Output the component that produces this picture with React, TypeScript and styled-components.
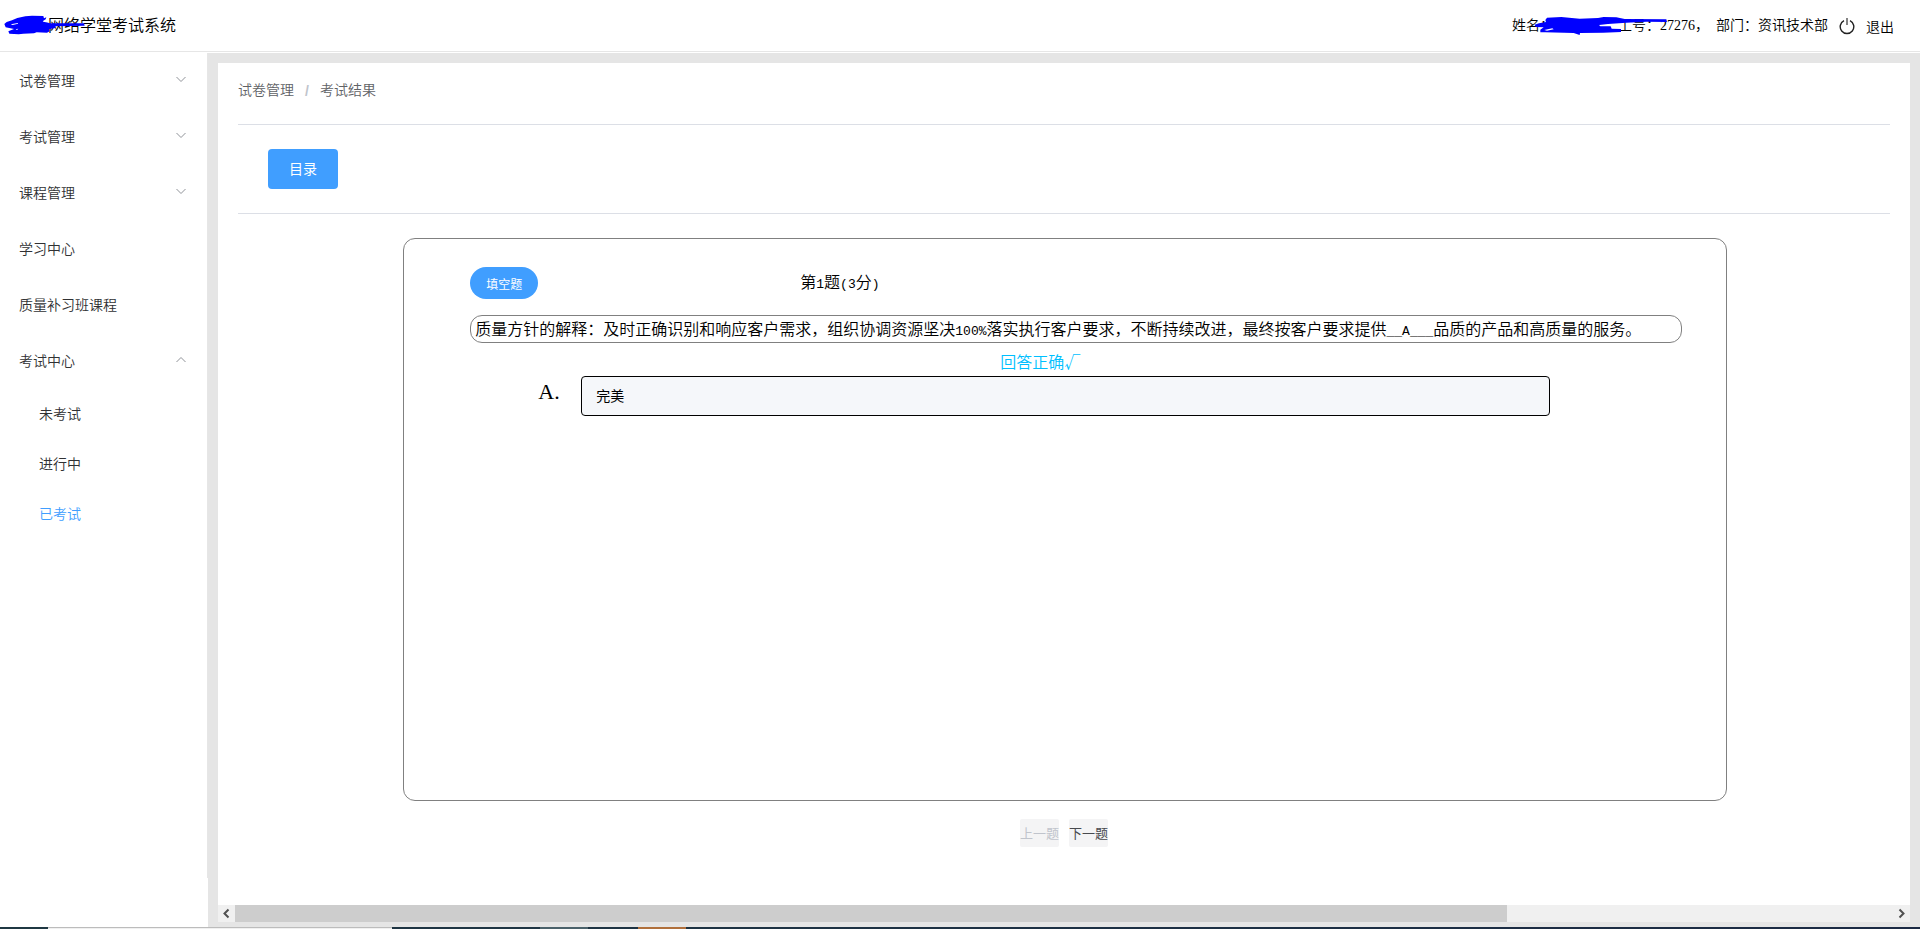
import React from 'react';
import styled, { createGlobalStyle } from 'styled-components';

const GlobalStyle = createGlobalStyle`
  *, *::before, *::after { box-sizing: border-box; }
  body {
    margin: 0;
    background: #fff;
    color: #000;
    font-family: 'Liberation Serif', 'Noto Sans CJK SC', sans-serif;
    font-size: 16px;
    line-height: 20px;
  }
  button, input { font-family: 'Noto Sans CJK SC', sans-serif; }
`;

const Page = styled.div`
  display: flex;
  flex-direction: column;
  min-height: 100vh;
`;

const Header = styled.header`
  display: flex;
  align-items: center;
  justify-content: space-between;
  height: 52px;
  margin-bottom: 1px;
  padding: 0 26px 0 48px;
  border-bottom: 1px solid #e6e6e6;
`;

const Title = styled.h1`
  position: relative;
  margin: 0;
  font-size: 16px;
  font-weight: 350;
`;

const UserBar = styled.div`
  position: relative;
  display: flex;
  align-items: center;
  font-size: 14px;
  font-weight: 350;
`;

const UserName = styled.span`
  width: 106px;
`;

const Department = styled.span`
  margin-left: 7px;
`;

const Logout = styled.button`
  display: flex;
  align-items: center;
  gap: 11px;
  margin-left: 11px;
  padding: 0;
  border: 0;
  background: none;
  color: #000;
  font-size: 14px;
  font-weight: 350;
  line-height: 20px;
  cursor: pointer;
`;

const Scribble = styled.svg<{ $left: number }>`
  position: absolute;
  left: ${(p) => p.$left}px;
  top: -6px;
  fill: #00f;
`;

const Body = styled.div`
  display: flex;
  flex: 1;
`;

const Sidebar = styled.aside`
  display: flex;
  flex: none;
  width: 208px;
  padding-bottom: 49px;
`;

const Menu = styled.nav`
  flex: 1;
  border-right: 1px solid #e6e6e6;
`;

const MenuItem = styled.button`
  display: flex;
  align-items: center;
  justify-content: space-between;
  width: 100%;
  height: 56px;
  padding: 0 20px 2px 19px;
  border: 0;
  background: none;
  color: #303133;
  font-size: 14px;
  font-weight: 350;
  text-align: left;
  cursor: pointer;
`;

const SubMenu = styled.div`
  padding: 1px 0 0 39px;
`;

const SubItem = styled.a<{ $active?: boolean }>`
  display: block;
  color: ${(p) => (p.$active ? '#409eff' : '#303133')};
  font-size: 14px;
  font-weight: 350;
  line-height: 50px;
  text-decoration: none;
`;

const Main = styled.main`
  display: flex;
  flex: 1;
  min-width: 0;
  padding: 10px 10px 5px;
  background: #e5e5e5;
`;

const Panel = styled.div`
  display: flex;
  flex: 1;
  flex-direction: column;
  min-width: 0;
  background: #fff;
`;

const Content = styled.div`
  display: flex;
  flex: 1;
  flex-direction: column;
  padding: 0 20px 58px;
`;

const Breadcrumb = styled.nav`
  display: flex;
  align-items: center;
  height: 61px;
  padding-bottom: 5px;
  color: #606266;
  font-size: 14px;
  font-weight: 350;
`;

const Crumb = styled.a`
  color: inherit;
  text-decoration: none;
`;

const Separator = styled.span`
  width: 26px;
  color: #c0c4cc;
  font-family: 'Liberation Sans', sans-serif;
  font-weight: 700;
  text-align: center;
`;

const Toolbar = styled.div`
  padding: 24px 30px;
  border: solid #dcdfe6;
  border-width: 1px 0;
`;

const PrimaryButton = styled.button`
  display: block;
  width: 70px;
  height: 40px;
  padding: 0 0 2px;
  border: 0;
  border-radius: 4px;
  background: #409eff;
  color: #fff;
  font-size: 14px;
  cursor: pointer;
`;

const Card = styled.section`
  flex: 1;
  box-sizing: content-box;
  width: 80%;
  margin: 24px 0 0 10%;
  border: 1px solid #808080;
  border-radius: 12px;
`;

const Question = styled.div`
  width: 92%;
  margin-left: 5%;
  padding-top: 28px;
  font-weight: 350;
`;

const QuestionHead = styled.div`
  display: flex;
  align-items: center;
  height: 32px;
`;

const TypeButton = styled.button`
  width: 68px;
  height: 32px;
  padding: 0;
  border: 0;
  border-radius: 16px;
  background: #409eff;
  color: #fff;
  font-size: 12px;
`;

const QuestionTitle = styled.h2`
  margin: 0 0 0 262px;
  font-size: 16px;
  font-weight: 350;
`;

const QuestionText = styled.p`
  width: 1212px;
  max-width: 100%;
  margin: 16px 0 0;
  padding: 4px 4px 2px;
  border: 1px solid #808080;
  border-radius: 12px;
`;

const Half = styled.span`
  font-family: 'Liberation Mono', monospace;
  font-size: 13px;
  line-height: 1;
`;

const Verdict = styled.p`
  margin: 8px 0 0;
  padding-right: 76px;
  color: #00bfff;
  font-family: 'Noto Sans CJK SC', sans-serif;
  text-align: center;
`;

const AnswerRow = styled.div`
  display: flex;
  align-items: center;
  margin-top: 5px;
  padding-left: 68px;
`;

const AnswerLabel = styled.label`
  flex: none;
  width: 43px;
  padding-bottom: 8px;
  font-size: 22px;
  line-height: 24px;
`;

const AnswerInput = styled.input`
  flex: 0 1 969px;
  min-width: 0;
  height: 40px;
  padding: 0 14px 2px;
  border: 1px solid #000;
  border-radius: 4px;
  background: #f5f7fa;
  color: #000;
  font-size: 14px;
`;

const Pager = styled.div`
  display: flex;
  justify-content: center;
  gap: 10px;
  margin-top: 18px;
`;

const PageButton = styled.button`
  width: 39px;
  height: 28px;
  padding: 0 0 2px;
  border: 0;
  border-radius: 2px;
  background: #f4f4f5;
  color: #484a4e;
  font-size: 13px;
  white-space: nowrap;
  &:disabled { color: #c0c4cc; }
`;

const ScrollBar = styled.div`
  display: flex;
  height: 17px;
  background: #f0f0f0;
`;

const ScrollButton = styled.button`
  flex: none;
  width: 17px;
  height: 17px;
  padding: 0;
  border: 0;
  background: none;
  svg { display: block; }
`;

const Track = styled.div`
  flex: 1;
`;

const Thumb = styled.div`
  width: 76.7%;
  height: 100%;
  background: #cdcdcd;
`;

const TaskStrip = styled.footer`
  display: flex;
  height: 2px;
  background: linear-gradient(90deg, #1f3843, #1b2a44);
`;

const TaskSegment = styled.span<{ $width: number; $color?: string }>`
  flex: none;
  width: ${(p) => p.$width}px;
  background: ${(p) => p.$color ?? 'transparent'};
`;

const Chevron = ({ up }: { up?: boolean }) => (
  <svg width="12" height="12" viewBox="0 0 12 12" fill="none" stroke="#909399" aria-hidden="true">
    <path d={up ? 'M1.5 8L6 3.5L10.5 8' : 'M1.5 3L6 7.5L10.5 3'} />
  </svg>
);

const menu = [
  { label: '试卷管理', group: true },
  { label: '考试管理', group: true },
  { label: '课程管理', group: true },
  { label: '学习中心' },
  { label: '质量补习班课程' },
  { label: '考试中心', group: true, open: true },
];

const examPages = ['未考试', '进行中', '已考试'];

export default function App() {
  return (
    <Page>
      <GlobalStyle />
      <Header>
        <Title>
          网络学堂考试系统
          <Scribble $left={-48} width="90" height="30" viewBox="0 30 270 90" aria-hidden="true">
            <path d="M13 72L20 66L36 61L52 54L76 49L96 47L130 48L132 55L139 52L137 58L128 64L139 67L150 70L252 70L254 77L166 79L165 84L147 88L149 94L141 98L110 97L102 100L70 101L56 103L28 101L25 94L42 87L17 82Z" />
            <path fill="#fff" d="M32 73L54 69L54 71L38 75ZM47 88L55 86L51 90ZM128 65L141 59L139 67Z" />
          </Scribble>
        </Title>
        <UserBar>
          <UserName>姓名：</UserName>
          <span>工号：27276，</span>
          <Department>部门：资讯技术部</Department>
          <Logout type="button">
            <svg width="16" height="18" viewBox="0 0 16 18" fill="none" stroke="#222" strokeWidth="1.4" aria-hidden="true">
              <path d="M5 3.6A6.8 6.8 0 1 0 11 3.6" />
              <path d="M8 1V8" stroke="#777" strokeWidth="1.8" />
            </svg>
            退出
          </Logout>
          <Scribble $left={21} width="140" height="30" viewBox="160 30 420 90" aria-hidden="true">
            <path d="M202 53L245 51L300 56L355 54L372 51L410 52L435 57L560 58L562 66L500 65L440 68L385 72L358 75L362 79L393 79L396 86L424 87L424 96L370 98L301 99L300 105L282 99L196 97L182 97L182 89L192 82L168 81L165 74L178 70L199 66L197 60Z" />
            <path fill="#fff" d="M194 90L218 85L222 88L202 92Z" />
          </Scribble>
        </UserBar>
      </Header>
      <Body>
        <Sidebar>
          <Menu>
            {menu.map((item) => (
              <MenuItem key={item.label} type="button" aria-expanded={item.group ? !!item.open : undefined}>
                {item.label}
                {item.group && <Chevron up={item.open} />}
              </MenuItem>
            ))}
            <SubMenu>
              {examPages.map((label) => (
                <SubItem key={label} href="#" $active={label === '已考试'}>
                  {label}
                </SubItem>
              ))}
            </SubMenu>
          </Menu>
        </Sidebar>
        <Main>
          <Panel>
            <Content>
              <Breadcrumb>
                <Crumb href="#">试卷管理</Crumb>
                <Separator>/</Separator>
                <span>考试结果</span>
              </Breadcrumb>
              <Toolbar>
                <PrimaryButton type="button">目录</PrimaryButton>
              </Toolbar>
              <Card>
                <Question>
                  <QuestionHead>
                    <TypeButton type="button">填空题</TypeButton>
                    <QuestionTitle>
                      第<Half>1</Half>题<Half>(3</Half>分<Half>)</Half>
                    </QuestionTitle>
                  </QuestionHead>
                  <QuestionText>
                    质量方针的解释：及时正确识别和响应客户需求，组织协调资源坚决<Half>100%</Half>
                    落实执行客户要求，不断持续改进，最终按客户要求提供<Half>__A___</Half>
                    品质的产品和高质量的服务。
                  </QuestionText>
                  <Verdict>回答正确√</Verdict>
                  <AnswerRow>
                    <AnswerLabel htmlFor="answer-a">A.</AnswerLabel>
                    <AnswerInput id="answer-a" defaultValue="完美" readOnly />
                  </AnswerRow>
                </Question>
              </Card>
              <Pager>
                <PageButton type="button" disabled>上一题</PageButton>
                <PageButton type="button">下一题</PageButton>
              </Pager>
            </Content>
            <ScrollBar>
              <ScrollButton type="button" aria-label="向左滚动">
                <svg width="17" height="17" fill="none" stroke="#505050" strokeWidth="2">
                  <path d="M10.5 4.5L6.5 8.5L10.5 12.5" />
                </svg>
              </ScrollButton>
              <Track>
                <Thumb />
              </Track>
              <ScrollButton type="button" aria-label="向右滚动">
                <svg width="17" height="17" fill="none" stroke="#505050" strokeWidth="2">
                  <path d="M6.5 4.5L10.5 8.5L6.5 12.5" />
                </svg>
              </ScrollButton>
            </ScrollBar>
          </Panel>
        </Main>
      </Body>
      <TaskStrip>
        <TaskSegment $width={48} />
        <TaskSegment $width={344} $color="linear-gradient(#bcbcbc 50%, #f0f0f0 50%)" />
        <TaskSegment $width={148} />
        <TaskSegment $width={48} $color="#4b626b" />
        <TaskSegment $width={50} />
        <TaskSegment $width={48} $color="#b0703c" />
      </TaskStrip>
    </Page>
  );
}
